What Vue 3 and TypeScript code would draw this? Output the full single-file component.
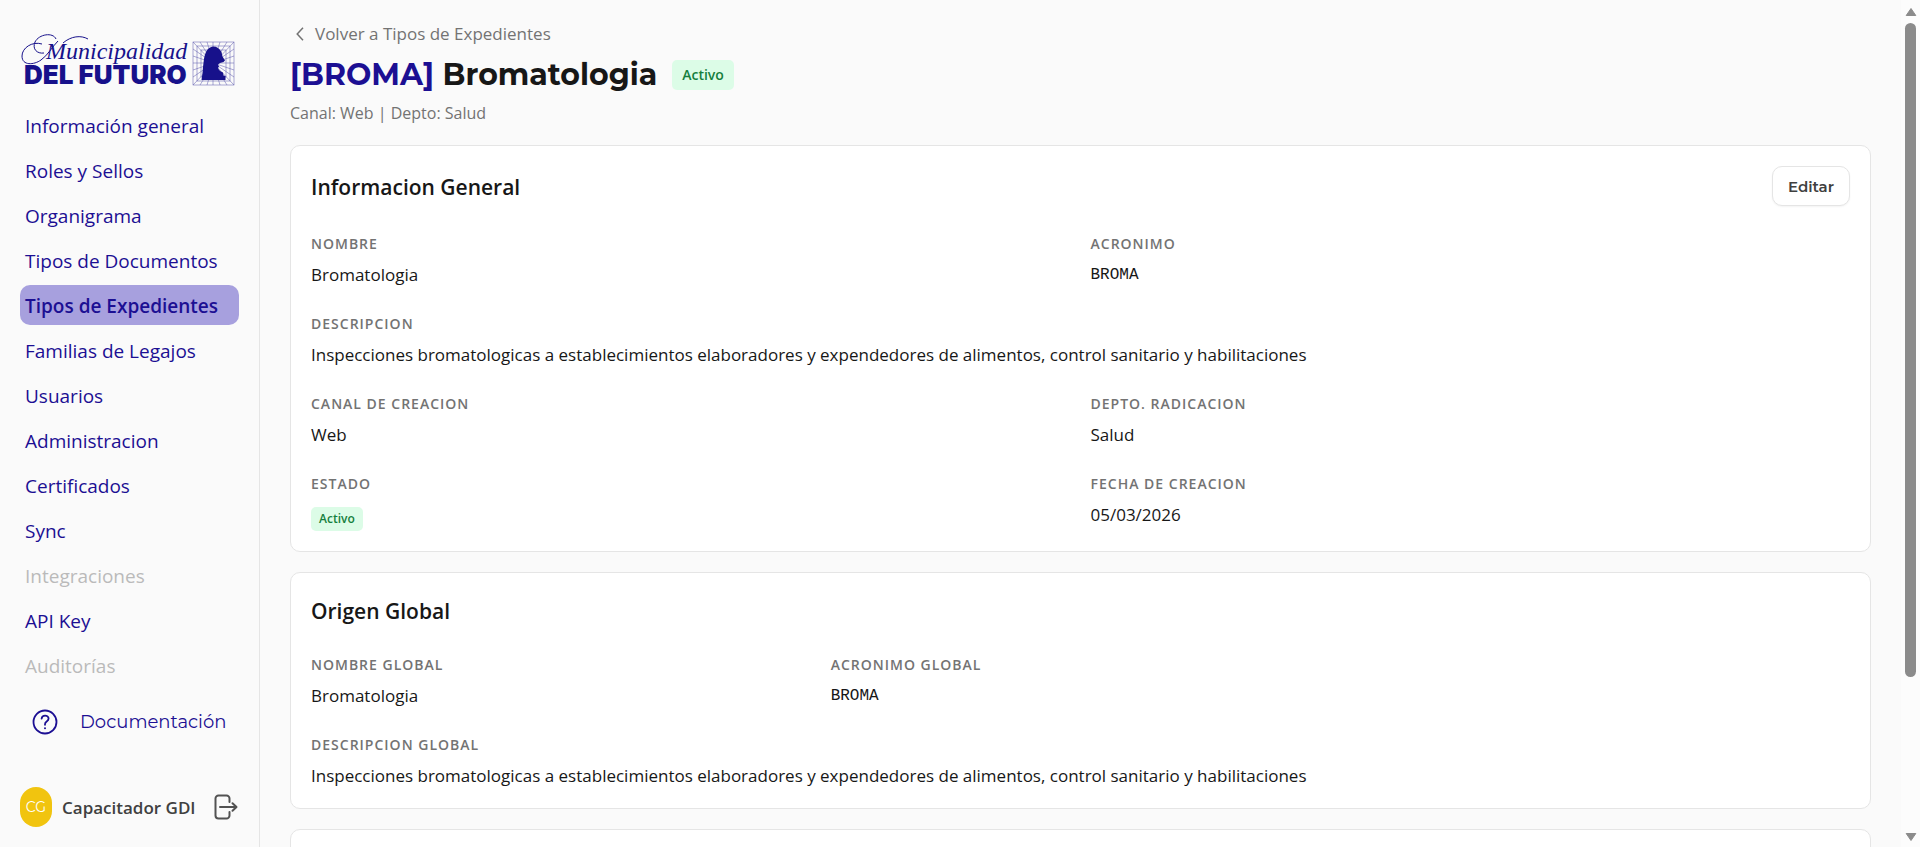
<script setup lang="ts">
interface NavItem {
  label: string
  active?: boolean
  disabled?: boolean
}

interface Field {
  label: string
  value: string
  kind?: 'code' | 'badge'
  wide?: boolean
}

const navItems: NavItem[] = [
  { label: 'Información general' },
  { label: 'Roles y Sellos' },
  { label: 'Organigrama' },
  { label: 'Tipos de Documentos' },
  { label: 'Tipos de Expedientes', active: true },
  { label: 'Familias de Legajos' },
  { label: 'Usuarios' },
  { label: 'Administracion' },
  { label: 'Certificados' },
  { label: 'Sync' },
  { label: 'Integraciones', disabled: true },
  { label: 'API Key' },
  { label: 'Auditorías', disabled: true },
]

const description =
  'Inspecciones bromatologicas a establecimientos elaboradores y expendedores de alimentos, control sanitario y habilitaciones'

const generalFields: Field[] = [
  { label: 'NOMBRE', value: 'Bromatologia' },
  { label: 'ACRONIMO', value: 'BROMA', kind: 'code' },
  { label: 'DESCRIPCION', value: description, wide: true },
  { label: 'CANAL DE CREACION', value: 'Web' },
  { label: 'DEPTO. RADICACION', value: 'Salud' },
  { label: 'ESTADO', value: 'Activo', kind: 'badge' },
  { label: 'FECHA DE CREACION', value: '05/03/2026' },
]

const globalFields: Field[] = [
  { label: 'NOMBRE GLOBAL', value: 'Bromatologia' },
  { label: 'ACRONIMO GLOBAL', value: 'BROMA', kind: 'code' },
  { label: 'DESCRIPCION GLOBAL', value: description, wide: true },
]
</script>

<template>
  <div class="app">
    <aside class="sidebar">
      <svg class="logo" viewBox="0 0 216 56" role="img" aria-label="Municipalidad del Futuro">
        <g class="flourish">
          <path d="M36 8C33 1 19 3 15 11c-3 7 2 12 9 11" />
          <path d="M22 13C12 10 2 17 2 25c0 10 12 9 19 4 7-5 11-13 17-19" />
          <path d="M43 12c8-7 18-8 25-4" />
        </g>
        <text class="logo-script" x="26" y="28">Municipalidad</text>
        <text class="logo-name" x="4" y="53">DEL FUTURO</text>
        <g class="emblem-grid">
          <rect x="173" y="11" width="41" height="43" />
          <rect x="177" y="15" width="33" height="35" />
          <rect x="181" y="19" width="25" height="27" />
          <path d="M173 11l41 43M214 11l-41 43M193 11v43M173 32h41M180 11l27 43M187 11l13 43M200 11l-13 43M207 11l-27 43M173 18l41 28M173 25l41 14M173 39l41-14M173 46l41-28" />
        </g>
        <path
          class="emblem"
          d="M181.500 49l1-7 .5-6 1-8c1-7 4-12 9-12.500 4 0 6.500 2 8.500 5.500l1 4.500 2.500 4-1.500 1.500-3.500 1-2 1.500 1 2-1 1.500c1 2 2.500 3.500 5 4.500l.5 3 2 .5v4z"
        />
      </svg>

      <nav class="nav" aria-label="Principal">
        <template v-for="item in navItems" :key="item.label">
          <span v-if="item.disabled" class="nav-item disabled" aria-disabled="true">{{ item.label }}</span>
          <a
            v-else
            href="#"
            class="nav-item"
            :class="{ active: item.active }"
            :aria-current="item.active ? 'page' : undefined"
          >{{ item.label }}</a>
        </template>
      </nav>

      <a href="#" class="docs">
        <svg class="docs-icon" viewBox="0 0 26 26" aria-hidden="true">
          <circle cx="13" cy="13" r="11.5" />
          <path d="M9.600 9.600c.3-2 1.700-3 3.500-3s3.500 1.200 3.500 3c0 1.500-.9 2.200-1.900 2.900-1 .7-1.700 1.300-1.700 2.800v.5" />
          <circle class="dot" cx="13" cy="19.200" r="1" />
        </svg>
        <span>Documentación</span>
      </a>

      <div class="user">
        <span class="avatar">CG</span>
        <span class="user-name">Capacitador GDI</span>
        <button type="button" class="logout" aria-label="Cerrar sesión">
          <svg viewBox="0 0 24 26" aria-hidden="true">
            <path d="M15.500 8V4.500a3 3 0 0 0-3-3H4.500a3 3 0 0 0-3 3v17a3 3 0 0 0 3 3h8a3 3 0 0 0 3-3V18" />
            <path d="M6 13h16M18.500 9.300 22.500 13l-4 3.700" />
          </svg>
        </button>
      </div>
    </aside>

    <main class="content">
      <header class="page-head">
        <a href="#" class="back">
          <svg viewBox="0 0 8 14" aria-hidden="true"><path d="M7 .8 1.200 7 7 13.200" /></svg>
          <span>Volver a Tipos de Expedientes</span>
        </a>
        <div class="title-row">
          <h1><span class="code-tag">[BROMA]</span> Bromatologia</h1>
          <span class="badge badge-large">Activo</span>
        </div>
        <p class="subtitle">Canal: Web | Depto: Salud</p>
      </header>

      <section class="card">
        <div class="card-head">
          <h2>Informacion General</h2>
          <button type="button" class="edit">Editar</button>
        </div>
        <dl class="fields two">
          <div v-for="f in generalFields" :key="f.label" class="field" :class="{ wide: f.wide }">
            <dt>{{ f.label }}</dt>
            <dd v-if="f.kind === 'badge'" class="badge-value"><span class="badge">{{ f.value }}</span></dd>
            <dd v-else :class="{ code: f.kind === 'code' }">{{ f.value }}</dd>
          </div>
        </dl>
      </section>

      <section class="card">
        <div class="card-head">
          <h2>Origen Global</h2>
        </div>
        <dl class="fields three">
          <div v-for="f in globalFields" :key="f.label" class="field" :class="{ wide: f.wide }">
            <dt>{{ f.label }}</dt>
            <dd :class="{ code: f.kind === 'code' }">{{ f.value }}</dd>
          </div>
        </dl>
      </section>

      <section class="card upcoming"></section>
    </main>

    <div class="scrollbar" aria-hidden="true">
      <svg viewBox="0 0 12 10"><path d="M6 1.500 10.800 8.500H1.200z" /></svg>
      <div class="track"><div class="thumb"></div></div>
      <svg viewBox="0 0 12 10"><path d="M6 8.500 1.200 1.500h9.600z" /></svg>
    </div>
  </div>
</template>

<style>
body {
  margin: 0;
  overflow: hidden;
}
</style>

<style scoped>
.app {
  display: flex;
  height: 100vh;
  overflow: hidden;
  background: #fafafa;
  color: #171717;
  font-family: "Segoe UI", "Open Sans", "Noto Sans", sans-serif;
}

.sidebar {
  box-sizing: border-box;
  flex: 0 0 260px;
  display: flex;
  flex-direction: column;
  padding: 31px 20px 20px;
  border-right: 1px solid #e5e5e5;
}

.logo {
  flex: none;
  width: 216px;
  height: 56px;
  margin-bottom: 18px;
  overflow: visible;
}

.flourish {
  fill: none;
  stroke: #17118b;
  stroke-width: 1;
}

.logo-script {
  fill: #17118b;
  font: italic 400 24px "Liberation Serif", serif;
}

.logo-name {
  fill: #17118b;
  font: 900 26px Inter, sans-serif;
}

.emblem-grid {
  fill: none;
  stroke: #17118b;
  stroke-width: 0.500;
  opacity: 0.700;
}

.emblem {
  fill: #17118b;
}

.nav {
  display: flex;
  flex-direction: column;
  gap: 5px;
}

.nav-item {
  padding: 2px 5px 0;
  border-radius: 10px;
  color: #1c0f93;
  font-size: 19px;
  line-height: 38px;
  text-decoration: none;
  white-space: nowrap;
}

.nav-item.active {
  background: #a7a0de;
  font-weight: 600;
}

.nav-item.disabled {
  color: #bababa;
}

.docs {
  display: flex;
  align-items: center;
  gap: 22px;
  height: 38px;
  margin-top: 18px;
  padding-left: 12px;
  color: #1c0f93;
  font-family: Montserrat, Inter, sans-serif;
  font-size: 18px;
  font-weight: 400;
  text-decoration: none;
}

.docs-icon {
  width: 26px;
  height: 26px;
  fill: none;
  stroke: currentColor;
  stroke-width: 1.800;
  stroke-linecap: round;
}

.docs-icon .dot {
  fill: currentColor;
  stroke: none;
}

.user {
  display: flex;
  align-items: center;
  margin-top: auto;
}

.avatar {
  width: 32px;
  border-radius: 16px;
  background: #f1c40f;
  color: #fff;
  font-family: Montserrat, Inter, sans-serif;
  font-size: 14px;
  font-weight: 400;
  line-height: 40px;
  text-align: center;
}

.user-name {
  flex: 1;
  margin-left: 10px;
  padding-top: 2px;
  color: #404040;
  font-size: 17px;
  font-weight: 600;
  line-height: 26px;
  white-space: nowrap;
}

.logout {
  display: flex;
  margin-right: 1px;
  padding: 0;
  border: 0;
  background: none;
}

.logout svg {
  width: 24px;
  height: 26px;
  fill: none;
  stroke: #525252;
  stroke-width: 2;
  stroke-linecap: round;
  stroke-linejoin: round;
}

.content {
  flex: 1;
  min-width: 0;
  display: flex;
  flex-direction: column;
  gap: 20px;
  padding: 20px 30px 0;
}

.back {
  display: flex;
  align-items: center;
  gap: 11px;
  padding-left: 6px;
  color: #737373;
  font-size: 17px;
  line-height: 27px;
  text-decoration: none;
}

.back svg {
  width: 8px;
  height: 14px;
  fill: none;
  stroke: currentColor;
  stroke-width: 1.500;
}

.title-row {
  display: flex;
  align-items: center;
  gap: 15px;
  margin-top: 8px;
}

h1 {
  margin: 0;
  font-family: Montserrat, Inter, sans-serif;
  font-size: 30px;
  font-weight: 700;
  line-height: 40px;
}

.code-tag {
  color: #1c0f93;
}

.badge {
  display: inline-block;
  padding: 0 8px;
  border-radius: 5px;
  background: #dcfce7;
  color: #15803d;
  font-size: 12px;
  font-weight: 600;
  line-height: 24px;
}

.badge-large {
  padding: 0 10px;
  font-size: 14px;
  line-height: 30px;
}

.subtitle {
  margin: 6px 0 0;
  color: #737373;
  font-size: 16px;
  line-height: 24px;
}

.card {
  padding: 20px;
  border: 1px solid #e5e5e5;
  border-radius: 10px;
  background: #fff;
}

.card.upcoming {
  height: 200px;
}

.card-head {
  display: flex;
  align-items: center;
  justify-content: space-between;
  margin-bottom: 25px;
}

h2 {
  margin: 0;
  padding-top: 2px;
  font-size: 21px;
  font-weight: 600;
  line-height: 32px;
}

.edit {
  height: 40px;
  padding: 0 15px;
  border: 1px solid #e5e5e5;
  border-radius: 10px;
  background: #fff;
  box-shadow: 0 1px 2px rgba(0, 0, 0, 0.050);
  color: #404040;
  font-family: Montserrat, Inter, sans-serif;
  font-size: 15px;
  font-weight: 600;
}

.fields {
  display: grid;
  gap: 24px 20px;
  margin: 0;
}

.two {
  grid-template-columns: repeat(2, 1fr);
}

.three {
  grid-template-columns: repeat(3, 1fr);
}

.wide {
  grid-column: 1 / -1;
}

dt {
  margin-bottom: 6px;
  color: #737373;
  font-size: 14px;
  font-weight: 600;
  line-height: 26px;
  letter-spacing: 1px;
}

dd {
  margin: 0;
  font-size: 17px;
  line-height: 24px;
}

dd.code {
  font-family: Consolas, "Liberation Mono", monospace;
  font-size: 16px;
}

.badge-value {
  display: flex;
  padding-top: 4px;
}

.scrollbar {
  box-sizing: border-box;
  flex: 0 0 19px;
  display: flex;
  flex-direction: column;
  align-items: center;
  gap: 6px;
  padding: 7px 0 5px;
  background: #fcfcfc;
}

.scrollbar svg {
  flex: none;
  width: 12px;
  height: 10px;
  fill: #8b8b8b;
  stroke: #8b8b8b;
  stroke-width: 1;
  stroke-linejoin: round;
}

.track {
  flex: 1;
  display: flex;
  flex-direction: column;
}

.track::after {
  content: "";
  flex: 5;
}

.thumb {
  flex: 22;
  width: 11px;
  border-radius: 6px;
  background: #8b8b8b;
}
</style>
